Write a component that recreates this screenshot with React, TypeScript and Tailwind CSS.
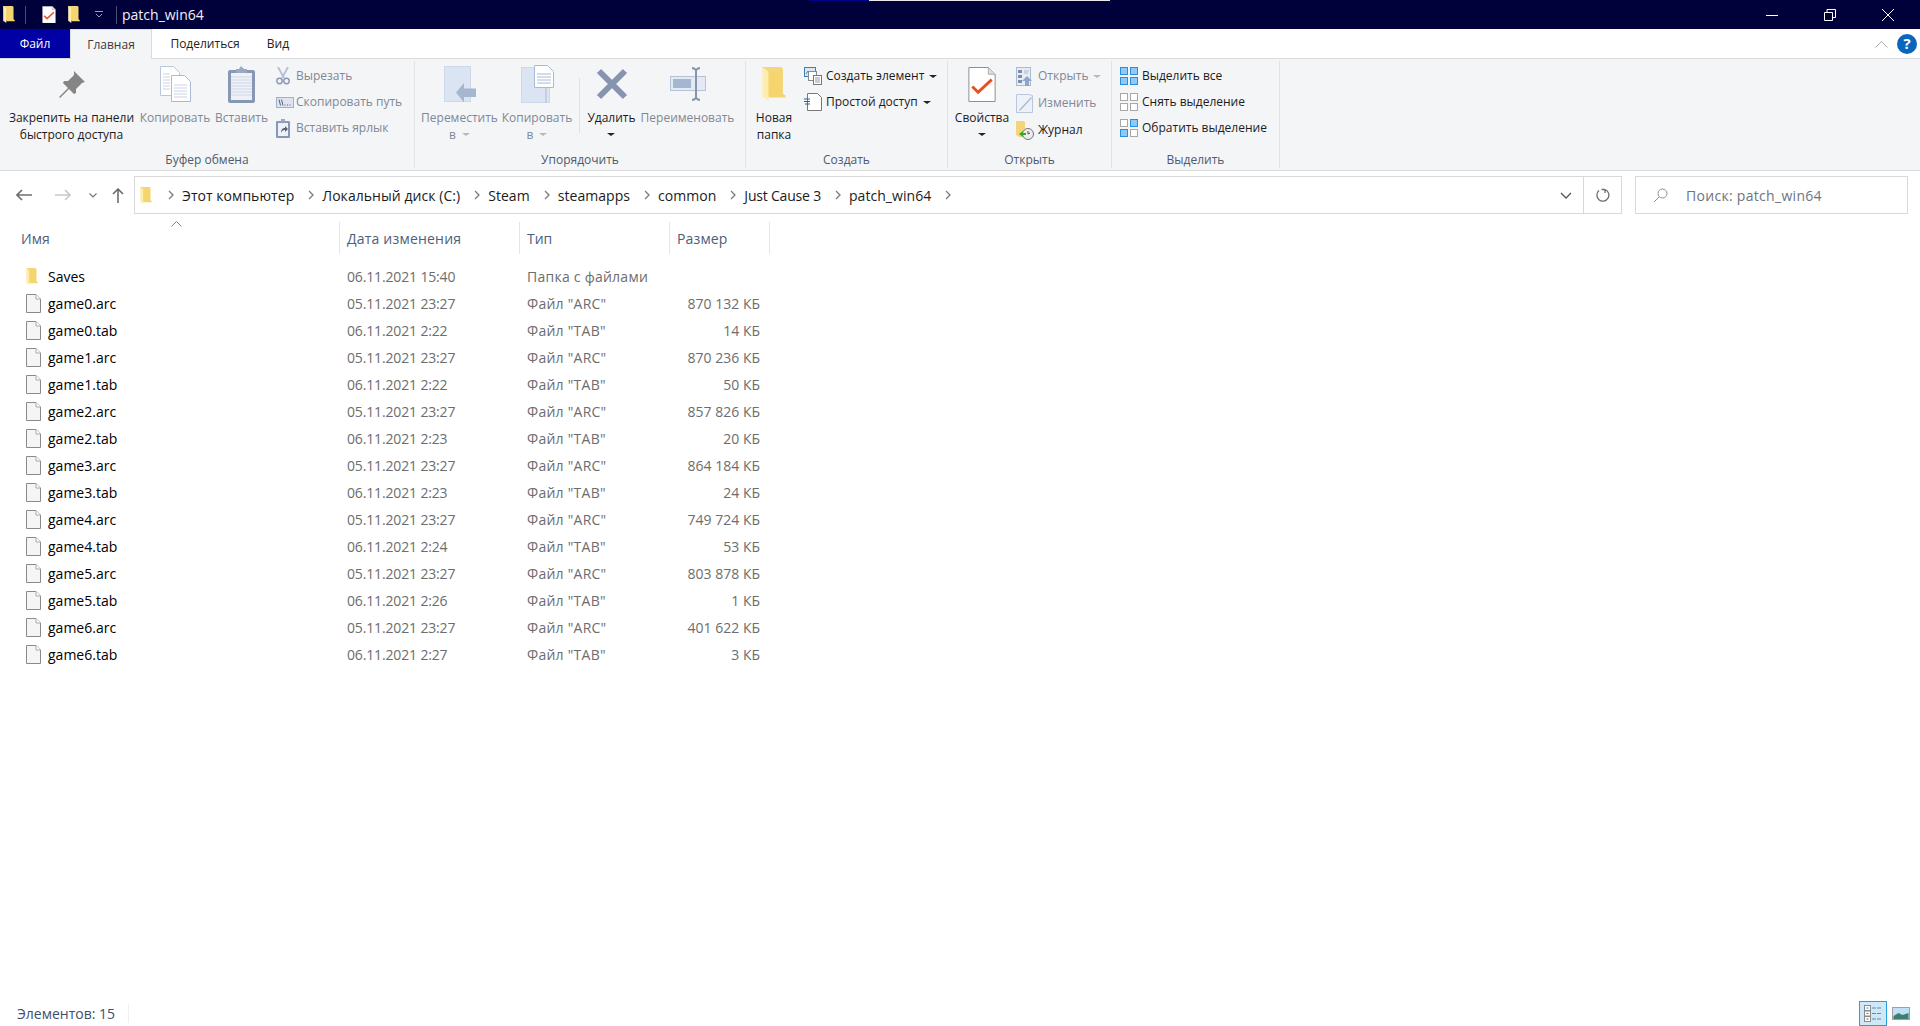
import React from "react";

const files = [
  ["game0.arc", "05.11.2021 23:27", 'Файл "ARC"', "870 132 КБ"],
  ["game0.tab", "06.11.2021 2:22", 'Файл "TAB"', "14 КБ"],
  ["game1.arc", "05.11.2021 23:27", 'Файл "ARC"', "870 236 КБ"],
  ["game1.tab", "06.11.2021 2:22", 'Файл "TAB"', "50 КБ"],
  ["game2.arc", "05.11.2021 23:27", 'Файл "ARC"', "857 826 КБ"],
  ["game2.tab", "06.11.2021 2:23", 'Файл "TAB"', "20 КБ"],
  ["game3.arc", "05.11.2021 23:27", 'Файл "ARC"', "864 184 КБ"],
  ["game3.tab", "06.11.2021 2:23", 'Файл "TAB"', "24 КБ"],
  ["game4.arc", "05.11.2021 23:27", 'Файл "ARC"', "749 724 КБ"],
  ["game4.tab", "06.11.2021 2:24", 'Файл "TAB"', "53 КБ"],
  ["game5.arc", "05.11.2021 23:27", 'Файл "ARC"', "803 878 КБ"],
  ["game5.tab", "06.11.2021 2:26", 'Файл "TAB"', "1 КБ"],
  ["game6.arc", "05.11.2021 23:27", 'Файл "ARC"', "401 622 КБ"],
  ["game6.tab", "06.11.2021 2:27", 'Файл "TAB"', "3 КБ"],
];

const crumbs = ["Этот компьютер", "Локальный диск (C:)", "Steam", "steamapps", "common", "Just Cause 3", "patch_win64"];

const Folder = ({ w = 13, h = 19 }: { w?: number; h?: number }) => (
  <svg width={w} height={h} viewBox="0 0 13 19" className="shrink-0">
    <path d="M0 0h10.5l1 1v15H3z" fill="#f3d67c" />
    <path d="M0 0l3.5 2.5V19L0 16.5z" fill="#fdeeb0" />
    <path d="M3.5 2.5h7.5v12l2 1.5v1H3.5z" fill="#f6d56f" />
  </svg>
);

const Check = ({ size = 20 }: { size?: number }) => (
  <svg width={size} height={size * 1.25} viewBox="0 0 28 36" className="shrink-0">
    <path d="M.5.5h20l7 7v28H.5z" fill="#fff" stroke="#8c8c8c" />
    <path d="M20.5.5v7h7" fill="#ddd" stroke="#b0b0b0" />
    <path d="M4 20l6 6L24 13" fill="none" stroke="#e8501f" strokeWidth="3" />
  </svg>
);

const Arrow = ({ flip, color }: { flip?: boolean; color: string }) => (
  <svg width="16" height="12" viewBox="0 0 16 12" className={flip ? "shrink-0 rotate-180" : "shrink-0"}>
    <path d="M1 6h15M6 1L1 6l5 5" fill="none" stroke={color} strokeWidth="1.6" />
  </svg>
);

const Chevron = () => (
  <svg width="6" height="10" viewBox="0 0 6 10" className="shrink-0">
    <path d="M1 1l4 4-4 4" fill="none" stroke="#7b7b7b" strokeWidth="1.3" />
  </svg>
);

const Caret = ({ light }: { light?: boolean }) => (
  <span className={light ? "inline-block border-x-[4px] border-t-[3px] border-x-transparent border-t-[#b8b8b8]" : "inline-block border-x-[4px] border-t-[3px] border-x-transparent border-t-[#222]"} />
);

const FileIcon = () => (
  <svg width="15" height="19" viewBox="0 0 15 19" className="shrink-0">
    <path d="M.5.5h9.5l4.5 4.5v13.5H.5z" fill="#f5f5f5" stroke="#8a8a8a" />
    <path d="M10 .5V5h4.5" fill="#fff" stroke="#a8a8a8" />
  </svg>
);

const Large = ({ w, icon, lines, off }: { w: number; icon: React.ReactNode; lines: React.ReactNode[]; off?: boolean }) => (
  <div className={off ? "flex flex-col items-center text-[#7f8896]" : "flex flex-col items-center text-[#1b1b1b]"} style={{ width: w }}>
    <div className="h-[46px] flex items-center justify-center">{icon}</div>
    <div className="mt-[2px] leading-[17px] text-center whitespace-nowrap flex flex-col items-center">
      {lines.map((l, i) => (
        <div key={i} className="h-[17px] flex items-center gap-[6px]">{l}</div>
      ))}
    </div>
  </div>
);

const Small = ({ icon, label, off, caret, iw = 22 }: { icon: React.ReactNode; label: string; off?: boolean; caret?: boolean; iw?: number }) => (
  <div className={off ? "flex items-center h-[26px] text-[#7f8896] whitespace-nowrap" : "flex items-center h-[26px] text-[#1b1b1b] whitespace-nowrap"}>
    <span className="h-[20px] flex items-center justify-start shrink-0" style={{ width: iw }}>{icon}</span>
    <span>{label}</span>
    {caret && <span className="ml-[5px] flex items-center"><Caret light={off} /></span>}
  </div>
);

const Group = ({ w, label, children }: { w: number; label: string; children: React.ReactNode }) => (
  <div className="h-[107px] mt-[2px] flex flex-col border-r border-[#e1e3e6] shrink-0" style={{ width: w }}>
    <div className="flex-1 flex items-start min-h-0">{children}</div>
    <div className="h-[20px] text-center text-[#4c5a6e] leading-[20px] -mb-[2px]">{label}</div>
  </div>
);

const Pin = () => (
  <svg width="26" height="27" viewBox="0 0 26 27">
    <path d="M15 0l11 11-3 1-6 6 0 4-2 1-5-5-9 9-1-1 9-9-5-5 1-2h4l6-6z" fill="#858585" />
  </svg>
);
const Copy = () => (
  <svg width="31" height="36" viewBox="0 0 31 36">
    <path d="M.5.5h13l6 6v23H.5z" fill="#fff" stroke="#b9c6dc" />
    <path d="M11.5 9.5h13l6 6v20h-19z" fill="#fff" stroke="#a9bad5" />
    <path d="M14 19h13M14 22h13M14 25h13M14 28h13M14 31h13M3 8h7M3 11h7M3 14h7M3 17h7M3 20h7M3 23h7" stroke="#c9d3e4" />
  </svg>
);
const Paste = () => (
  <svg width="27" height="37" viewBox="0 0 27 37">
    <rect x="0" y="4" width="27" height="33" rx="2" fill="#8797b4" />
    <rect x="3" y="7" width="21" height="27" fill="#eef1f7" />
    <path d="M3 11h21M3 14h21M3 17h21M3 20h21M3 23h21M3 26h21M3 29h21" stroke="#cfd7e6" />
    <path d="M8 7V3h3l2-3 3 3h3v4z" fill="#9aa8c2" />
  </svg>
);
const Scissors = () => (
  <svg width="14" height="18" viewBox="0 0 14 18">
    <path d="M2 0l6 11M12 0L6 11" stroke="#b4bfd2" strokeWidth="1.8" fill="none" />
    <circle cx="3.5" cy="14" r="2.7" fill="none" stroke="#8797b4" strokeWidth="1.4" />
    <circle cx="10.5" cy="14" r="2.7" fill="none" stroke="#8797b4" strokeWidth="1.4" />
  </svg>
);
const PathIcon = () => (
  <svg width="18" height="11" viewBox="0 0 18 11">
    <rect x=".5" y=".5" width="17" height="10" fill="#dfe5f0" stroke="#9fb0cb" />
    <path d="M3 2.5l1.5 6M5.5 2.5l1.5 6M8.5 8h1M11 8h1M13.5 8h1" stroke="#55627a" fill="none" />
  </svg>
);
const Shortcut = () => (
  <svg width="14" height="19" viewBox="0 0 14 19">
    <rect x="0" y="2" width="14" height="17" rx="1" fill="#8797b4" />
    <rect x="2" y="4" width="10" height="13" fill="#eef1f7" />
    <path d="M5 0h4v3H5z" fill="#9aa8c2" />
    <path d="M5 14c0-4 2-5 4-5V7l3 3-3 3v-2c-1 0-3 0-4 3z" fill="#55627a" />
  </svg>
);
const MoveTo = () => (
  <svg width="32" height="37" viewBox="0 0 32 37">
    <rect x=".5" y=".5" width="26" height="35" fill="#dbe4f2" stroke="#cdd8ea" />
    <path d="M12 26.500L20 17v5.500h12v8.500H20v5.500z" fill="#a6b5d0" />
  </svg>
);
const CopyTo = () => (
  <svg width="33" height="38" viewBox="0 0 33 38">
    <rect x=".5" y="2.5" width="28" height="35" fill="#dbe4f2" stroke="#cdd8ea" />
    <path d="M13.5.5h13l6 6v16h-19z" fill="#fff" stroke="#a9bad5" />
    <path d="M16 9h14M16 12h14M16 15h14M16 18h14" stroke="#a9bad5" />
    <path d="M25 23v15" stroke="#c2cee2" strokeWidth="2" />
  </svg>
);
const DeleteX = () => (
  <svg width="32" height="32" viewBox="0 0 32 32">
    <path d="M3 3l26 26M29 3L3 29" stroke="#8694b0" strokeWidth="6" />
  </svg>
);
const Rename = () => (
  <svg width="36" height="34" viewBox="0 0 36 34">
    <rect x=".5" y="9.5" width="35" height="14" fill="#e4eaf4" stroke="#b5c3da" />
    <rect x="3" y="12" width="18" height="9" fill="#a6b5d0" />
    <path d="M22 1c2 0 3 1 4 2 1-1 2-2 4-2M26 3v28M22 33c2 0 3-1 4-2 1 1 2 2 4 2" fill="none" stroke="#8694b0" strokeWidth="2" />
  </svg>
);
const NewItem = () => (
  <svg width="18" height="18" viewBox="0 0 18 18">
    <rect x=".5" y=".5" width="11" height="9" fill="#d9e6f5" stroke="#3f7fbf" />
    <path d="M2 7l2-3 2 2" fill="none" stroke="#5b8f4a" />
    <rect x="4.5" y="4.5" width="8" height="9" fill="#fff" stroke="#8a8a8a" />
    <rect x="9.5" y="8.5" width="8" height="9" fill="#fff" stroke="#777" />
    <path d="M11 11h5M11 13h5M11 15h5" stroke="#999" />
  </svg>
);
const EasyAccess = () => (
  <svg width="18" height="18" viewBox="0 0 18 18">
    <path d="M3.5.5h10l4 4v13h-14z" fill="#fff" stroke="#777" />
    <path d="M0 6h6M0 8.500h6M1 11h5" stroke="#2a5da8" />
  </svg>
);
const OpenIcon = () => (
  <svg width="16" height="19" viewBox="0 0 16 19">
    <rect x=".5" y=".5" width="14" height="18" fill="#e8edf5" stroke="#a9bad5" />
    <path d="M2 3h4v3H2zM2 8h4v3H2zM2 13h4v3H2z" fill="#7f8fab" />
    <path d="M8 4h5M8 6h4" stroke="#a9bad5" />
    <path d="M11 9l5 5h-3v5H9v-5H6z" fill="#8fa5c8" />
  </svg>
);
const EditIcon = () => (
  <svg width="17" height="19" viewBox="0 0 17 19">
    <path d="M.5.5h12l4 1v17H.5z" fill="#eef2f8" stroke="#b9c6dc" />
    <path d="M3 16L15 3l1 1L4 17z" fill="#a9bad5" />
  </svg>
);
const History = () => (
  <svg width="18" height="19" viewBox="0 0 18 19">
    <path d="M0 0h8l1 1v15H3L0 14z" fill="#f3d67c" />
    <circle cx="12" cy="13" r="5.500" fill="#ececec" stroke="#777" />
    <path d="M12 10v3l2-1" stroke="#555" fill="none" />
    <path d="M3 13l4-3v2h3v2H7v2z" fill="#35a52c" />
  </svg>
);
const Cells = ({ on, s }: { on: boolean[]; s: number }) => (
  <svg width={s} height={s} viewBox="0 0 18 18">
    {[[0, 0], [10, 0], [0, 10], [10, 10]].map(([x, y], i) => (
      <rect key={i} x={x + 0.5} y={y + 0.5} width="7" height="7" fill={on[i] ? "#90c8f6" : "#fff"} stroke={on[i] ? "#2b8fe0" : "#a8a8a8"} />
    ))}
  </svg>
);

const Cols = "grid grid-cols-[340px_180px_150px_100px] w-[770px]";

export default function App() {
  return (
    <div className="relative w-[1920px] h-[1026px] overflow-hidden bg-white text-[12px] flex flex-col font-['Open_Sans',sans-serif]">
      {/* stray strip on the first pixel row */}
      <div className="absolute top-0 left-[809px] w-[60px] h-px bg-[#000088]" />
      <div className="absolute top-0 left-[869px] w-[241px] h-px bg-[#e8e8e8]" />

      {/* title bar */}
      <div className="h-[29px] bg-[#00003a] flex items-center shrink-0 text-white">
        <div className="ml-[3px]"><Folder w={12} h={17} /></div>
        <div className="ml-[10px] w-px h-[18px] bg-[#4a4f6e]" />
        <div className="ml-[16px]"><Check size={14} /></div>
        <div className="ml-[12px]"><Folder w={12} h={17} /></div>
        <svg width="8" height="7" viewBox="0 0 8 7" className="ml-[15px]"><path d="M0 .5h8M1 3l3 3 3-3" fill="none" stroke="#9a9db0" /></svg>
        <div className="ml-[13px] w-px h-[18px] bg-[#4a4f6e]" />
        <div className="ml-[5px] text-[14px] text-[#f0f0f5]">patch_win64</div>
        <div className="flex ml-auto mr-[26px] items-center gap-[46px]">
          <svg width="12" height="12" viewBox="0 0 12 12"><path d="M0 6.500h12" stroke="#fff" /></svg>
          <svg width="12" height="12" viewBox="0 0 12 12"><path d="M.5 3.500h8v8h-8zM3 3.500V.5h8.500v8H8.500" fill="none" stroke="#fff" /></svg>
          <svg width="12" height="12" viewBox="0 0 12 12"><path d="M0 0l12 12M12 0L0 12" stroke="#fff" /></svg>
        </div>
      </div>

      {/* ribbon tabs */}
      <div className="h-[29px] flex items-stretch shrink-0 relative text-[#222]">
        <div className="w-[70px] bg-[#0000a5] text-white flex items-center justify-center">Файл</div>
        <div className="w-[82px] bg-[#f4f5f7] border-x border-t border-[#dadbdc] flex items-center justify-center z-10 mb-[-1px] text-[#3b3b3b]">Главная</div>
        <div className="w-[106px] flex items-center justify-center">Поделиться</div>
        <div className="w-[40px] flex items-center justify-center">Вид</div>
        <div className="ml-auto flex items-center mr-[3px] gap-[9px]">
          <svg width="13" height="8" viewBox="0 0 13 8"><path d="M.5 7.500l6-6 6 6" fill="none" stroke="#a8a8a8" /></svg>
          <div className="w-[20px] h-[20px] rounded-full bg-[#0a66bd] text-white text-[15px] font-bold flex items-center justify-center">?</div>
        </div>
      </div>

      {/* ribbon */}
      <div className="h-[113px] bg-[#f4f5f7] border-y border-[#dadbdc] flex shrink-0">
        <Group w={415} label="Буфер обмена">
          <div className="ml-[9px]"><Large w={125} icon={<Pin />} lines={["Закрепить на панели", "быстрого доступа"]} /></div>
          <div className="ml-[5px]"><Large w={72} off icon={<Copy />} lines={["Копировать"]} /></div>
          <div className="ml-[5px]"><Large w={51} off icon={<Paste />} lines={["Вставить"]} /></div>
          <div className="ml-[9px] mt-[2px]">
            <Small iw={20} off icon={<Scissors />} label="Вырезать" />
            <Small iw={20} off icon={<PathIcon />} label="Скопировать путь" />
            <Small iw={20} off icon={<Shortcut />} label="Вставить ярлык" />
          </div>
        </Group>
        <Group w={331} label="Упорядочить">
          <div className="ml-[6px]"><Large w={77} off icon={<MoveTo />} lines={["Переместить", <>в <Caret light /></>]} /></div>
          <div className="ml-[3px]"><Large w={72} off icon={<CopyTo />} lines={["Копировать", <>в <Caret light /></>]} /></div>
          <div className="ml-[6px] w-px h-[55px] mt-[17px] bg-[#dfe1e4]" />
          <div className="ml-[7px]"><Large w={49} icon={<DeleteX />} lines={["Удалить", <Caret />]} /></div>
          <div className="ml-[4px]"><Large w={95} off icon={<Rename />} lines={["Переименовать"]} /></div>
        </Group>
        <Group w={202} label="Создать">
          <div className="ml-[8px]"><Large w={40} icon={<Folder w={24} h={34} />} lines={["Новая", "папка"]} /></div>
          <div className="ml-[10px] mt-[2px]">
            <Small caret icon={<NewItem />} label="Создать элемент" />
            <Small caret icon={<EasyAccess />} label="Простой доступ" />
          </div>
        </Group>
        <Group w={164} label="Открыть">
          <div className="ml-[6px]"><Large w={56} icon={<Check size={28} />} lines={["Свойства", <Caret />]} /></div>
          <div className="ml-[6px] mt-[2px]">
            <Small off caret icon={<OpenIcon />} label="Открыть" />
            <div className="mt-[1px]"><Small off icon={<EditIcon />} label="Изменить" /></div>
            <div className="mt-[1px]"><Small icon={<History />} label="Журнал" /></div>
          </div>
        </Group>
        <Group w={168} label="Выделить">
          <div className="ml-[8px] mt-[2px]">
            <Small icon={<Cells s={18} on={[true, true, true, true]} />} label="Выделить все" />
            <Small icon={<Cells s={18} on={[false, false, false, false]} />} label="Снять выделение" />
            <Small icon={<Cells s={18} on={[false, true, true, false]} />} label="Обратить выделение" />
          </div>
        </Group>
      </div>

      {/* address row */}
      <div className="h-[38px] mt-[5px] flex items-center shrink-0">
        <div className="w-[134px] flex items-center pl-[16px]">
          <Arrow color="#6d6d6d" />
          <div className="ml-[23px]"><Arrow flip color="#c8c8c8" /></div>
          <svg width="8" height="5" viewBox="0 0 8 5" className="ml-[18px]"><path d="M.5.5L4 4 7.500.5" fill="none" stroke="#777" strokeWidth="1.200" /></svg>
          <svg width="12" height="15" viewBox="0 0 12 15" className="ml-[15px]"><path d="M6 15V1M1 6l5-5 5 5" fill="none" stroke="#666" strokeWidth="1.500" /></svg>
        </div>
        <div className="w-[1450px] h-[38px] border border-[#d9d9d9] flex items-center text-[14px] text-[#1b1b1b]">
          <div className="ml-[5px]"><Folder w={12} h={17} /></div>
          <div className="flex items-center ml-[16px] gap-[8px]">
            {crumbs.map((c) => (
              <React.Fragment key={c}>
                <Chevron />
                <span className={c === "Just Cause 3" ? "mr-[6px] tracking-[-0.2px]" : "mr-[6px] tracking-[0.05px]"}>{c}</span>
              </React.Fragment>
            ))}
            <Chevron />
          </div>
          <svg width="12" height="7" viewBox="0 0 12 7" className="ml-auto mr-[11px]"><path d="M1 1l5 5 5-5" fill="none" stroke="#555" strokeWidth="1.300" /></svg>
        </div>
        <div className="w-[38px] h-[38px] border border-l-0 border-[#d9d9d9] flex items-center justify-center">
          <svg width="14" height="14" viewBox="0 0 14 14"><path d="M9 1.500A6 6 0 1 1 3 2.500M9 1.500V5M9 1.500H5.500" fill="none" stroke="#6d6d6d" strokeWidth="1.300" /></svg>
        </div>
        <div className="ml-[13px] w-[273px] h-[38px] border border-[#d9d9d9] flex items-center text-[14px] text-[#6d7480] tracking-[0.3px]">
          <svg width="15" height="15" viewBox="0 0 15 15" className="ml-[17px]"><circle cx="9.500" cy="5.500" r="4.500" fill="none" stroke="#8a8f99" /><path d="M6 9l-5 5" stroke="#8a8f99" /></svg>
          <span className="ml-[18px]">Поиск: patch_win64</span>
        </div>
      </div>

      {/* column headers */}
      <div className={`${Cols} h-[32px] mt-[8px] text-[14px] text-[#4c607a] relative shrink-0`}>
        <svg width="11" height="6" viewBox="0 0 11 6" className="absolute left-[171px] top-[-1px]"><path d="M.5 5.500l5-5 5 5" fill="none" stroke="#8a8a8a" /></svg>
        <div className="pl-[21px] flex items-center border-r border-[#e5e5e5]">Имя</div>
        <div className="pl-[7px] flex items-center border-r border-[#e5e5e5] tracking-[0.2px]">Дата изменения</div>
        <div className="pl-[7px] flex items-center border-r border-[#e5e5e5]">Тип</div>
        <div className="pl-[7px] flex items-center border-r border-[#e5e5e5] tracking-[0.15px]">Размер</div>
      </div>

      {/* file list */}
      <div className="mt-[9px] flex flex-col text-[14px] text-[#6d6d6d] flex-1 min-h-0">
        <div className={`${Cols} h-[27px] items-center`}>
          <div className="flex items-center pl-[26px] text-black"><Folder w={12} h={17} /><span className="ml-[10px]">Saves</span></div>
          <div className="pl-[7px] tracking-[-0.15px]">06.11.2021 15:40</div>
          <div className="pl-[7px] tracking-[0.25px]">Папка с файлами</div>
          <div />
        </div>
        {files.map(([name, date, type, size]) => (
          <div key={name} className={`${Cols} h-[27px] items-center`}>
            <div className="flex items-center pl-[26px] text-black"><FileIcon /><span className="ml-[7px]">{name}</span></div>
            <div className="pl-[7px] tracking-[-0.15px]">{date}</div>
            <div className="pl-[7px] tracking-[0.25px]">{type}</div>
            <div className="text-right pr-[10px]">{size}</div>
          </div>
        ))}
      </div>

      {/* status bar */}
      <div className="h-[25px] flex items-center shrink-0 text-[14px] text-[#3e4f6b]">
        <div className="pl-[17px] w-[129px] h-[19px] flex items-center border-r border-[#efefef]">Элементов: 15</div>
        <div className="ml-auto mr-[10px] flex items-center gap-[5px]">
          <div className="w-[28px] h-[25px] bg-[#cce8f9] border border-[#26a0da] flex items-center justify-center">
            <svg width="18" height="17" viewBox="0 0 18 17">
              <rect x=".5" y=".5" width="6" height="5" fill="#fff" stroke="#8a8a8a" />
              <rect x=".5" y="6" width="6" height="5" fill="#fff" stroke="#8a8a8a" />
              <rect x=".5" y="11.500" width="6" height="5" fill="#fff" stroke="#8a8a8a" />
              <path d="M2.500 2.500h2v1h-2z" fill="#3b82c4" /><path d="M2.500 8h2v1h-2z" fill="#7a7a2a" /><path d="M2.500 13.500h2v1h-2z" fill="#b03a2a" />
              <path d="M8 3h4M13 3h4M8 8.500h4M13 8.500h4M8 14h4M13 14h4" stroke="#808080" />
            </svg>
          </div>
          <svg width="18" height="13" viewBox="0 0 18 13">
            <rect x=".5" y=".5" width="17" height="12" fill="#bfe0f5" stroke="#a0a0a0" />
            <path d="M1.500 9l5-3 4 2 6-2v6h-15z" fill="#3e7f6d" />
          </svg>
        </div>
      </div>
    </div>
  );
}
